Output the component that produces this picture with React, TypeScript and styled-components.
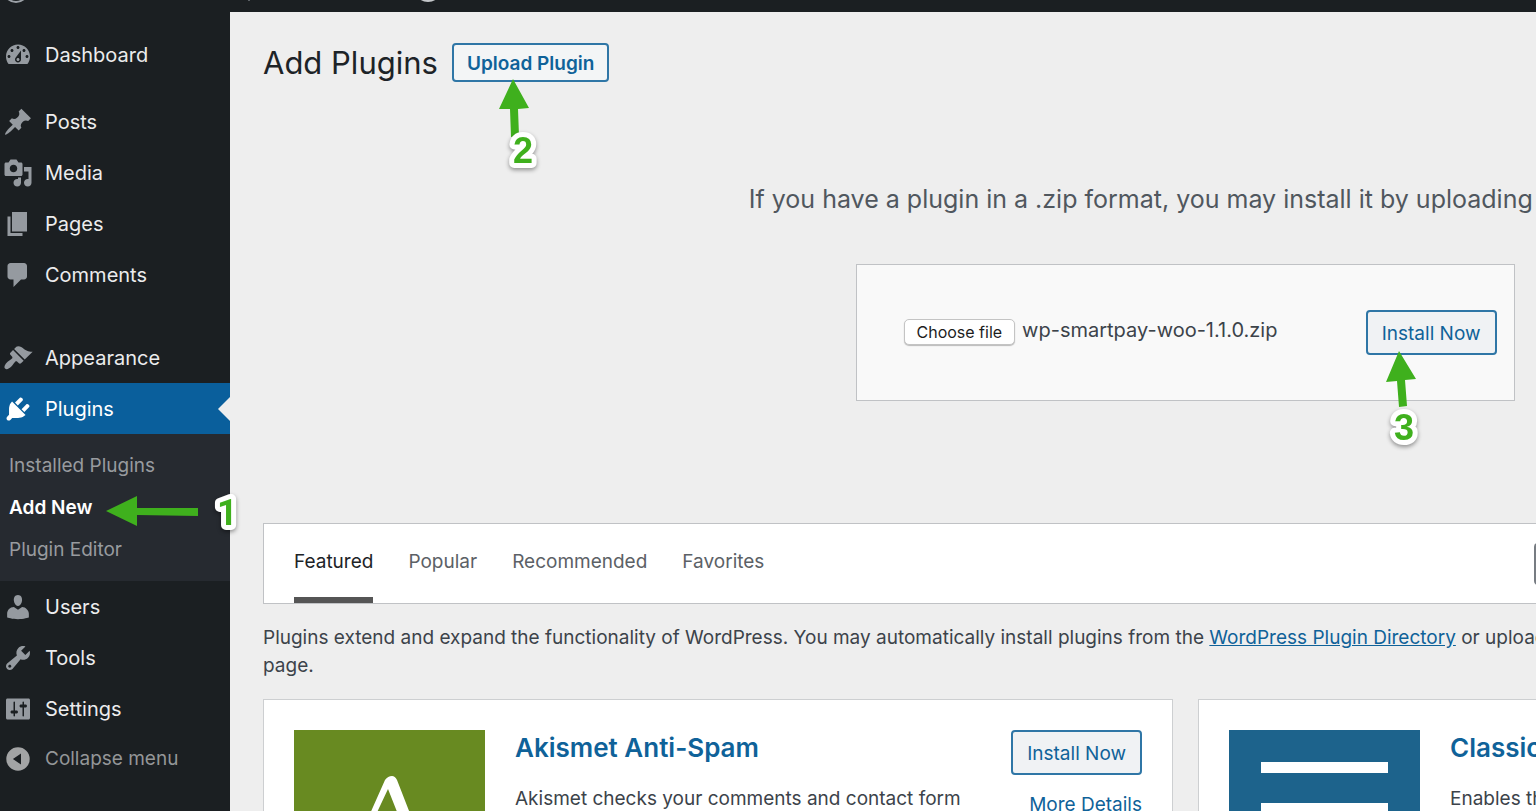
import React from "react";
import styled, { createGlobalStyle } from "styled-components";

const Global = createGlobalStyle`
  *, *::before, *::after { box-sizing: border-box; }
  html, body { margin: 0; }
  body { background: #eeeeee; color: #3c434a; font-family: Inter, "Liberation Sans", sans-serif; overflow: hidden; }
  h1, h2, h3, p, ul { margin: 0; padding: 0; }
  ul { list-style: none; }
  button, input { font-family: inherit; }
`;

const Page = styled.div`position: relative; display: flex; flex-direction: column; height: 100vh; overflow: hidden;`;
const AdminBar = styled.header`display: flex; flex: none; height: 12px; background: #1b1f22; overflow: hidden;`;
const BarArt = styled.svg`display: block; flex: none;`;
const Body = styled.div`display: flex; flex: 1; min-height: 0;`;

const Sidebar = styled.nav`flex: none; width: 230px; padding-top: 17px; background: #1b1f22;`;
const Menu = styled.ul`display: flex; flex-direction: column;`;
const MenuItem = styled.li<{ $gap?: number }>`margin-bottom: ${(p) => p.$gap ?? 0}px;`;
const MenuLink = styled.a<{ $current?: boolean; $muted?: boolean }>`
  position: relative; display: flex; align-items: center; gap: 12px; height: ${(p) => (p.$muted ? 49 : 51)}px; padding-left: 3px;
  font-size: ${(p) => (p.$muted ? 19 : 20)}px; line-height: 28px; text-decoration: none;
  color: ${(p) => (p.$current ? "#fff" : p.$muted ? "#949698" : "#ececed")};
  background: ${(p) => (p.$current ? "#0a5f9c" : "transparent")};
  svg { flex: none; fill: ${(p) => (p.$current ? "#fff" : p.$muted ? "#a3a4a5" : "#959aa0")}; }
  &::after {
    content: ""; display: ${(p) => (p.$current ? "block" : "none")};
    position: absolute; right: 0; top: 14px; border: solid transparent; border-width: 12px 12px 12px 0; border-right-color: #eee;
  }
`;
const Submenu = styled.ul`padding: 11px 0 10px 9px; background: #262a30;`;
const SubLink = styled.a<{ $current?: boolean }>`
  display: block; font-size: 19px; line-height: 42px; text-decoration: none;
  font-weight: ${(p) => (p.$current ? 600 : 400)}; color: ${(p) => (p.$current ? "#fff" : "#989b9f")};
`;

const Main = styled.main`flex: 1; min-width: 0; padding: 30px 0 0 33px; overflow: hidden;`;
const TitleRow = styled.div`display: flex; align-items: center; gap: 14px;`;
const Title = styled.h1`font-size: 31px; line-height: 41px; font-weight: 400; color: #1d2327;`;
const Button = styled.button<{ $strong?: boolean }>`
  flex: none; height: ${(p) => (p.$strong ? 39 : 45)}px; padding: 2px ${(p) => (p.$strong ? 13 : 14)}px 0;
  border: 2px solid #2f76a6; border-radius: 4px; background: ${(p) => (p.$strong ? "#f3f5f6" : "#f0f2f4")};
  color: #0f6299; font-size: 19px; font-weight: ${(p) => (p.$strong ? 600 : 400)}; white-space: nowrap;
`;
const Upload = styled.section`display: flex; flex-direction: column; align-items: center; width: 1844px; padding-top: 95px;`;
const Help = styled.p`font-size: 25px; line-height: 42px; color: #50575e; white-space: nowrap;`;
const UploadForm = styled.form`
  display: flex; align-items: center; justify-content: space-between; width: 659px; height: 137px; margin-top: 44px;
  padding: 0 17px 0 47px; border: 1px solid #c0c2c5; background: #f9f9f9;
`;
const FileField = styled.div`display: flex; align-items: center; gap: 7px; padding-bottom: 2px;`;
const FileButton = styled.button`
  height: 26px; padding: 0 12px; border: 1px solid #c4c4c4; border-radius: 5px; background: #fff; box-shadow: 0 1px 1px #bbb;
  color: #1d1d1d; font-size: 16px; white-space: nowrap;
`;
const FileName = styled.span`padding-bottom: 4px; font-size: 20px; line-height: 28px; color: #3c434a; white-space: nowrap;`;
const Filter = styled.div`
  display: flex; justify-content: space-between; width: 1844px; height: 81px; margin-top: 122px; padding-left: 30px;
  border: 1px solid #c0c2c5; background: #fff;
`;
const Tabs = styled.ul`display: flex; gap: 35px;`;
const Tab = styled.a<{ $current?: boolean }>`
  display: block; height: 79px; font-size: 19px; line-height: 76px; text-decoration: none; white-space: nowrap;
  color: ${(p) => (p.$current ? "#1d2327" : "#5c6166")}; border-bottom: ${(p) => (p.$current ? "6px solid #555" : "0")};
`;
const Search = styled.select`width: 572px; height: 42px; margin-top: 19px; border: 2px solid #777c82; border-radius: 4px; background: #fff;`;
const Intro = styled.p`width: 1844px; margin-top: 20px; font-size: 19px; line-height: 28px; color: #3c434a;`;
const Link = styled.a`color: #0f6299;`;
const Cards = styled.div`display: grid; grid-template-columns: 910px 910px; gap: 25px; margin-top: 19px;`;
const Card = styled.article`display: flex; gap: 30px; height: 300px; padding: 30px; border: 1px solid #cdcfd1; background: #fff;`;
const CardIcon = styled.svg`flex: none; width: 191px; height: 191px;`;
const CardText = styled.div`flex: 1; min-width: 0;`;
const CardTitle = styled.h3`font-size: 26px; line-height: 36px; font-weight: 600; color: #0f6299; white-space: nowrap;`;
const CardBody = styled.p`margin-top: 19px; font-size: 19px; line-height: 28px; color: #3c434a;`;
const CardActions = styled.div`display: flex; flex-direction: column; align-items: flex-end; gap: 16px;`;
const DetailsLink = styled.a`font-size: 19px; line-height: 28px; color: #0f6299; text-decoration: none;`;
const Callouts = styled.svg`
  position: absolute; left: 0; top: 0; pointer-events: none; overflow: visible;
`;
const StepNumber = styled.text<{ $font?: string }>`
  font-family: ${(p) => p.$font ?? '"Liberation Sans"'}, sans-serif; font-size: 36px; font-weight: 700; fill: #3fb01d;
  stroke: #fff; stroke-width: 10px; stroke-linejoin: round; paint-order: stroke; filter: drop-shadow(0 2px 2px #0006);
`;

const paths = {
  dashboard: "M3.76 16h12.48c.11-.14.21-.27.31-.41.76-1.11 1.26-2.42 1.41-3.82.02-.25.04-.51.04-.77 0-4.42-3.58-8-8-8s-8 3.58-8 8c0 .26.02.52.04.77.15 1.4.65 2.71 1.41 3.82.1.14.2.27.31.41zM10 4c.55 0 1 .45 1 1s-.45 1-1 1-1-.45-1-1 .45-1 1-1zM6 6c.55 0 1 .45 1 1s-.45 1-1 1-1-.45-1-1 .45-1 1-1zm8 0c.55 0 1 .45 1 1s-.45 1-1 1-1-.45-1-1 .45-1 1-1zm-5.37 5.55L12 7v6c0 1.1-.9 2-2 2s-2-.9-2-2c0-.57.24-1.08.63-1.45zM4 10c.55 0 1 .45 1 1s-.45 1-1 1-1-.45-1-1 .45-1 1-1zm12 0c.55 0 1 .45 1 1s-.45 1-1 1-1-.45-1-1 .45-1 1-1zm-5 3c0-.55-.45-1-1-1s-1 .45-1 1 .45 1 1 1 1-.45 1-1z",
  posts: "M10.44 3.02l1.82-1.82 6.36 6.35-1.83 1.82c-1.05-.68-2.48-.57-3.41.36l-.75.75c-.92.93-1.04 2.35-.35 3.41l-1.83 1.82-2.41-2.41-2.8 2.79c-.42.42-3.38 2.71-3.8 2.29s1.86-3.39 2.28-3.81l2.79-2.79L4.1 9.36l1.83-1.82c1.05.69 2.48.57 3.4-.36l.75-.75c.93-.92 1.05-2.35.36-3.41z",
  media: "M13 11V4c0-.55-.45-1-1-1h-1.67L9 1H5L3.67 3H2c-.55 0-1 .45-1 1v7c0 .55.45 1 1 1h10c.55 0 1-.45 1-1zM7 4.5c1.38 0 2.5 1.12 2.5 2.5S8.38 9.5 7 9.5 4.5 8.38 4.5 7 5.62 4.5 7 4.5zM14 6h5v10.5c0 1.38-1.12 2.5-2.5 2.5S14 17.88 14 16.5s1.12-2.5 2.5-2.5c.17 0 .34.02.5.05V9h-3V6zm-4 8.05V13h2v3.5c0 1.38-1.12 2.5-2.5 2.5S7 17.88 7 16.5 8.12 14 9.5 14c.17 0 .34.02.5.05z",
  pages: "M6 15V2h10v13H6zm-1 1h8v2H3V5h2v11z",
  comments: "M5 2h9c1.1 0 2 .9 2 2v7c0 1.1-.9 2-2 2h-2l-5 5v-5H5c-1.1 0-2-.9-2-2V4c0-1.1.9-2 2-2z",
  appearance: "M14.48 11.06L7.41 3.99l1.5-1.5c.5-.56 2.3-.47 3.51.32 1.21.8 1.43 1.28 2.91 2.1 1.18.64 2.45 1.26 4.45.85zm-.71.71L6.7 4.7 4.93 6.47c-.39.39-.39 1.02 0 1.41l1.06 1.06c.39.39.39 1.03 0 1.42-.6.6-1.43 1.11-2.21 1.69-.35.26-.7.53-1.01.84C1.43 14.23.4 16.08 1.4 17.07c.99 1 2.84-.03 4.18-1.36.31-.31.58-.66.85-1.02.57-.78 1.08-1.61 1.69-2.21.39-.39 1.02-.39 1.41 0l1.06 1.06c.39.39 1.02.39 1.41 0z",
  plugins: "M13.11 4.36L9.87 7.6 8 5.73l3.24-3.24c.35-.34 1.05-.2 1.56.32.52.51.66 1.21.31 1.55zm-8 1.77l.91-1.12 9.01 9.01-1.19.84c-.71.71-2.63 1.16-3.82 1.16H6.14L4.9 17.26c-.59.59-1.54.59-2.12 0-.59-.58-.59-1.53 0-2.12l1.24-1.24v-3.88c0-1.13.4-3.19 1.09-3.89zm7.26 3.97l3.24-3.24c.34-.35 1.04-.21 1.55.31.52.51.66 1.21.31 1.55l-3.24 3.25z",
  users: "M10 9.25c-2.27 0-2.73-3.44-2.73-3.44C7 4.02 7.82 2 9.97 2c2.16 0 2.98 2.02 2.71 3.81 0 0-.41 3.44-2.68 3.44zm0 2.57L12.72 10c2.39 0 4.52 2.33 4.52 4.53v2.49s-3.65 1.13-7.24 1.13c-3.65 0-7.24-1.13-7.24-1.13v-2.49c0-2.25 1.94-4.48 4.47-4.48z",
  tools: "M16.68 9.77c-1.34 1.34-3.3 1.67-4.95.99l-5.41 6.52c-.99.99-2.59.99-3.58 0s-.99-2.59 0-3.57l6.52-5.42c-.68-1.65-.35-3.61.99-4.95 1.28-1.28 3.12-1.62 4.72-1.06l-2.89 2.89 2.82 2.82 2.86-2.87c.53 1.58.18 3.39-1.08 4.65zM3.81 16.21c.4.39 1.04.39 1.43 0 .4-.4.4-1.04 0-1.43-.39-.4-1.03-.4-1.43 0-.39.39-.39 1.03 0 1.43z",
  settings: "M18 16V4c0-.55-.45-1-1-1H3c-.55 0-1 .45-1 1v12c0 .55.45 1 1 1h14c.55 0 1-.45 1-1zM8 11h1c.55 0 1 .45 1 1s-.45 1-1 1H8v1.5c0 .28-.22.5-.5.5s-.5-.22-.5-.5V13H6c-.55 0-1-.45-1-1s.45-1 1-1h1V5.5c0-.28.22-.5.5-.5s.5.22.5.5V11zm5-2h-1c-.55 0-1-.45-1-1s.45-1 1-1h1V5.5c0-.28.22-.5.5-.5s.5.22.5.5V7h1c.55 0 1 .45 1 1s-.45 1-1 1h-1v5.5c0 .28-.22.5-.5.5s-.5-.22-.5-.5V9z",
  collapse: "M10 2.2a7.8 7.8 0 1 0 0 15.6 7.8 7.8 0 0 0 0-15.6zM12 6.300v7.400L6.600 10z",
};

const Icon = ({ name }: { name: keyof typeof paths }) => (
  <svg width="30" height="30" viewBox="0 0 20 20" aria-hidden="true"><path fillRule="evenodd" d={paths[name]} /></svg>
);

type Entry = { label: string; icon: keyof typeof paths; gap?: number; current?: boolean };
const entries: Entry[] = [
  { label: "Dashboard", icon: "dashboard", gap: 16 },
  { label: "Posts", icon: "posts" },
  { label: "Media", icon: "media" },
  { label: "Pages", icon: "pages" },
  { label: "Comments", icon: "comments", gap: 32 },
  { label: "Appearance", icon: "appearance" },
  { label: "Plugins", icon: "plugins", current: true },
  { label: "Users", icon: "users" },
  { label: "Tools", icon: "tools" },
  { label: "Settings", icon: "settings" },
];

export default function App() {
  return (
    <Page>
      <Global />
      <AdminBar>
        <BarArt width="460" height="12" aria-hidden="true">
          <circle cx="16" cy="-10" r="12" fill="none" stroke="#9ca1a7" strokeWidth="2" />
          <circle cx="428" cy="-12" r="14" fill="#c3c6c9" />
          <path d="M248 0h2l-1 1z" fill="#9ca1a7" />
        </BarArt>
      </AdminBar>
      <Body>
        <Sidebar aria-label="Main menu">
          <Menu>
            {entries.map((e) => (
              <MenuItem key={e.label} $gap={e.gap}>
                <MenuLink href="#" $current={e.current}><Icon name={e.icon} />{e.label}</MenuLink>
                {e.current && (
                  <Submenu>
                    <li><SubLink href="#">Installed Plugins</SubLink></li>
                    <li><SubLink href="#" $current>Add New</SubLink></li>
                    <li><SubLink href="#">Plugin Editor</SubLink></li>
                  </Submenu>
                )}
              </MenuItem>
            ))}
            <MenuItem><MenuLink href="#" $muted><Icon name="collapse" />Collapse menu</MenuLink></MenuItem>
          </Menu>
        </Sidebar>
        <Main>
          <TitleRow><Title>Add Plugins</Title><Button $strong>Upload Plugin</Button></TitleRow>
          <Upload>
            <Help>If you have a plugin in a .zip format, you may install it by uploading it here.</Help>
            <UploadForm>
              <FileField><FileButton type="button">Choose file</FileButton><FileName>wp-smartpay-woo-1.1.0.zip</FileName></FileField>
              <Button type="button">Install Now</Button>
            </UploadForm>
          </Upload>
          <Filter>
            <Tabs>
              <li><Tab href="#" $current>Featured</Tab></li>
              <li><Tab href="#">Popular</Tab></li>
              <li><Tab href="#">Recommended</Tab></li>
              <li><Tab href="#">Favorites</Tab></li>
            </Tabs>
            <Search aria-label="Search by" />
          </Filter>
          <Intro>
            Plugins extend and expand the functionality of WordPress. You may automatically install plugins from the <Link href="#">WordPress Plugin Directory</Link> or upload a plugin in .zip format by clicking the button at the top of this page.
          </Intro>
          <Cards>
            <Card>
              <CardIcon viewBox="0 0 191 191" aria-hidden="true">
                <rect width="191" height="191" fill="#688a21" />
                <path d="M51 140L91 50Q94 46 98 46Q101 46 103 50L138 140H126L94 59L56 140Z" fill="#fff" />
              </CardIcon>
              <CardText>
                <CardTitle>Akismet Anti-Spam</CardTitle>
                <CardBody>Akismet checks your comments and contact form</CardBody>
              </CardText>
              <CardActions><Button>Install Now</Button><DetailsLink href="#">More Details</DetailsLink></CardActions>
            </Card>
            <Card>
              <CardIcon viewBox="0 0 191 191" aria-hidden="true">
                <rect width="191" height="191" fill="#1d638c" />
                <path d="M32 32h127v11H32zM32 73h127v11H32z" fill="#fff" />
              </CardIcon>
              <CardText>
                <CardTitle>Classic Editor</CardTitle>
                <CardBody>Enables the previous editor</CardBody>
              </CardText>
            </Card>
          </Cards>
        </Main>
      </Body>
      <Callouts width="1" height="1">
        <path fill="#3fb01d" d="M106 511L137 496V508L198 508V516L137 515V526Z" />
        <path fill="#3fb01d" d="M513 79L529 108L518 109L519 136L511 137L510 109L499 109Z" />
        <path fill="#3fb01d" d="M1399 351L1416 379L1405 380L1407 406L1399 407L1397 381L1386 382Z" />
        <StepNumber x="217" y="525" $font="Roboto">1</StepNumber>
        <StepNumber x="513" y="163">2</StepNumber>
        <StepNumber x="1394" y="440">3</StepNumber>
      </Callouts>
    </Page>
  );
}
